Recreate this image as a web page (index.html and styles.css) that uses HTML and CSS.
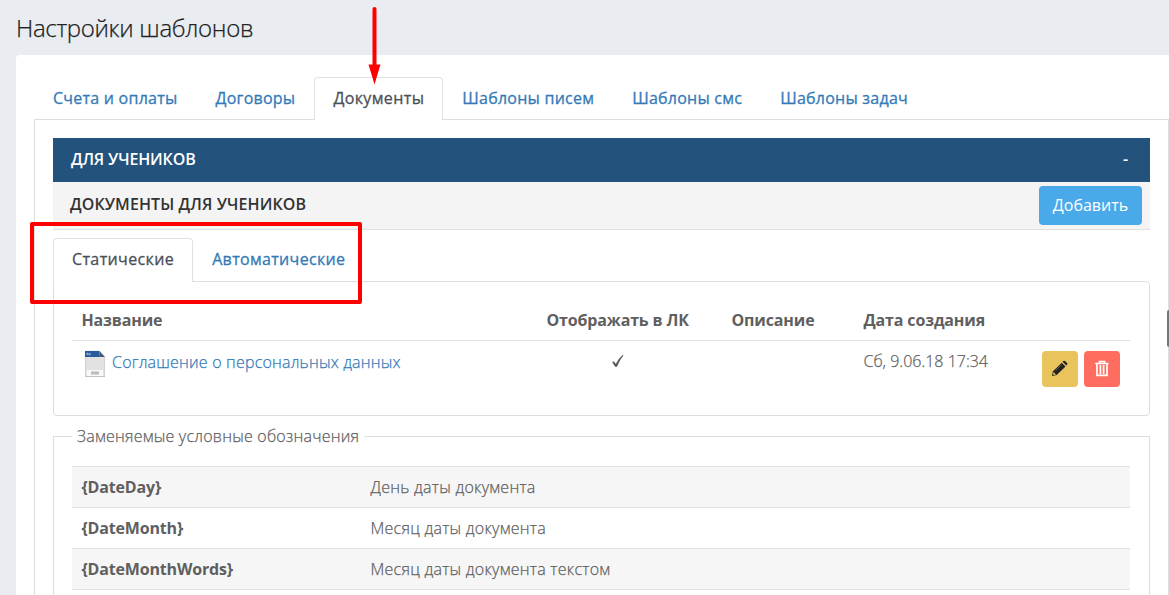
FILE: index.html
```html
<!DOCTYPE html>
<html lang="ru">
<head>
    <meta charset="UTF-8">
    <meta name="viewport" content="width=device-width, initial-scale=1.0">
    <title>Настройки шаблонов</title>
    <link rel="stylesheet" href="styles.css">
</head>
<body>
    <h1 class="page-title">Настройки шаблонов</h1>
    <main class="panel">
        <nav class="tabs">
            <a class="tab">Счета и оплаты</a>
            <a class="tab">Договоры</a>
            <a class="tab active">Документы</a>
            <a class="tab">Шаблоны писем</a>
            <a class="tab">Шаблоны смс</a>
            <a class="tab">Шаблоны задач</a>
        </nav>
        <div class="tab-content">
            <div class="group-header"><span>ДЛЯ УЧЕНИКОВ</span><span class="collapse">-</span></div>
            <div class="sub-header">
                <span>ДОКУМЕНТЫ ДЛЯ УЧЕНИКОВ</span>
                <button class="btn-add">Добавить</button>
            </div>
            <nav class="tabs inner-tabs">
                <a class="tab active">Статические</a>
                <a class="tab">Автоматические</a>
            </nav>
            <div class="documents">
                <div class="doc-row doc-head">
                    <div>Название</div>
                    <div>Отображать в ЛК</div>
                    <div>Описание</div>
                    <div>Дата создания</div>
                    <div></div>
                </div>
                <div class="doc-row">
                    <div class="doc-name">
                        <svg class="file-icon" width="22" height="28" viewBox="0 0 22 28">
                            <path d="M1 .5h14l6 6.500v19.500H1z" fill="#e2e2e2"/>
                            <path d="M1.500 7v19.500h19V7" fill="none" stroke="#d2d2d2"/>
                            <path d="M1 1h14l1 6H1z" fill="#285b9f"/>
                            <path d="M15 .5l6 6.500h-5z" fill="#4a5a75"/>
                            <path d="M3 5V3l3 2V3" fill="none" stroke="#a9c2e5"/>
                            <path d="M3 20h16v6H3z" fill="#f8f8f8"/>
                            <path d="M7 21.500h8v3H7z" fill="#bcbcbc"/>
                            <path d="M1 26.500h20" stroke="#c2c2c2"/>
                        </svg>
                        <a>Соглашение о персональных данных</a>
                    </div>
                    <div class="doc-visible">
                        <svg width="14" height="14" viewBox="0 0 14 14"><path d="M1.300 8.200l1.500-1 2 2.700Q7.500 4.500 11.700 1l.9.300Q8.500 6 5.900 12.800H4.200z" fill="#555"/></svg>
                    </div>
                    <div></div>
                    <div class="doc-date">Сб, 9.06.18 17:34</div>
                    <div class="actions">
                        <button class="btn-icon edit">
                            <svg width="17" height="17" viewBox="0 0 18 18"><path d="M1 17l1.200-5L11.400 2.800l4 4L6 16z" fill="#222"/><path d="M12.300 1.900l.8-.8q1-.8 2 .1l1.900 1.900q.8.900 0 1.900l-.8.900z" fill="#222"/><path d="M2.800 12.800l2.500 2.500-2.200.6-.9-.9z" fill="#e9c35b"/><path d="M5 11l6.300-6.300" stroke="#817044" stroke-width=".8"/></svg>
                        </button>
                        <button class="btn-icon delete">
                            <svg width="16" height="18" viewBox="0 0 16 18"><path d="M5.500 3V1.500h5V3M1.300 3.500h13.400M3 4v11.400h10V4M6.400 5v9M9.600 5v9" fill="none" stroke="#fff" stroke-width="1.700"/></svg>
                        </button>
                    </div>
                </div>
            </div>
            <fieldset class="legend-box">
                <legend>Заменяемые условные обозначения</legend>
                <div class="var-row"><b>{DateDay}</b><span>День даты документа</span></div>
                <div class="var-row"><b>{DateMonth}</b><span>Месяц даты документа</span></div>
                <div class="var-row"><b>{DateMonthWords}</b><span>Месяц даты документа текстом</span></div>
            </fieldset>
        </div>
    </main>

    <div class="highlight"></div>
    <svg class="arrow" width="14" height="80" viewBox="0 0 14 80"><path d="M6.500 4v58" stroke="#f00" stroke-width="4" stroke-linecap="round"/><path d="M.5 59.500h12l-6 20z" fill="#f00"/></svg>
    <div class="side-handle"></div>
</body>
</html>
```

FILE: styles.css
```css
* {
    box-sizing: border-box;
}
body {
    display: flex;
    flex-direction: column;
    margin: 0;
    height: 595px;
    overflow: hidden;
    position: relative;
    background-color: #e9edf2;
    color: #5f5f5f;
    font-family: 'Open Sans', sans-serif;
    font-size: 16px;
    line-height: 24px;
}
.page-title {
    margin: 0;
    padding: 12px 16px 11px;
    height: 55px;
    font-size: 24px;
    line-height: 32px;
    font-weight: 300;
    letter-spacing: -0.32px;
    color: #222;
    -webkit-text-stroke: 0.25px;
}
.panel {
    display: flex;
    flex-direction: column;
    flex: 1;
    min-height: 0;
    margin-left: 16px;
    padding: 22px 0 0 18px;
    background-color: #fff;
    border-top-left-radius: 4px;
}
.tabs {
    display: flex;
    flex-shrink: 0;
    height: 43px;
}
.tab {
    padding: 8px 18px 0;
    border: 1px solid transparent;
    color: #337ab7;
    font-weight: 400;
    letter-spacing: 0.24px;
    white-space: nowrap;
    -webkit-text-stroke: 0.3px;
}
.tab.active {
    position: relative;
    z-index: 1;
    color: #495057;
    background-color: #fff;
    border-color: #dee2e6;
    border-bottom: 0;
    border-radius: 4px 4px 0 0;
    letter-spacing: 0.38px;
}
.tab-content {
    flex: 1;
    min-height: 0;
    margin-top: -1px;
    padding: 18px 18px 0;
    border: 1px solid #dcdee1;
    border-bottom: 0;
}
.group-header {
    display: flex;
    justify-content: space-between;
    height: 44px;
    padding: 9px 22px 0 18px;
    background-color: #23527c;
    color: #fff;
    font-weight: 600;
    letter-spacing: -0.15px;
}
.sub-header {
    display: flex;
    justify-content: space-between;
    height: 48px;
    padding: 4px 8px 0 17px;
    background-color: #f4f4f4;
    border-bottom: 1px solid #dfe1e3;
    color: #333;
    font-weight: 600;
    line-height: 36px;
    letter-spacing: 0.1px;
}
.btn-add {
    width: 103px;
    height: 39px;
    padding: 0 0 2px;
    border: 0;
    border-radius: 4px;
    background-color: #4aa9e9;
    color: #fff;
    font: 16px 'Open Sans', sans-serif;
}
.inner-tabs {
    margin-top: 8px;
    height: 44px;
}
.inner-tabs .tab:not(.active) {
    letter-spacing: 0.33px;
}
.documents {
    margin-top: -1px;
    height: 135px;
    padding: 18px 19px 18px 18px;
    border: 1px solid #dcdee1;
    border-radius: 0 4px 4px 4px;
}
.doc-row {
    display: grid;
    grid-template-columns: 465px 185px 132px 170px 1fr;
    padding-left: 9.5px;
    font-weight: 300;
    -webkit-text-stroke: 0.25px;
}
.doc-head {
    height: 41px;
    padding-top: 8px;
    border-bottom: 1px solid #dee2e6;
    font-weight: 700;
    letter-spacing: -0.15px;
    -webkit-text-stroke: 0;
}
.doc-row:not(.doc-head) {
    padding-top: 8px;
}
.doc-name {
    display: flex;
    gap: 6px;
    padding-left: 2.5px;
    color: #337ab7;
    letter-spacing: 0.2px;
}
.doc-name a {
    padding-top: 1px;
}
.file-icon {
    margin-top: 1px;
}
.doc-visible {
    padding-left: 64px;
    padding-top: 5px;
    line-height: 0;
}
.actions {
    display: flex;
    gap: 6px;
    padding-top: 2px;
    padding-left: 8.5px;
}
.btn-icon {
    display: flex;
    align-items: center;
    justify-content: center;
    width: 36px;
    height: 36px;
    padding: 0 1px 1px 0;
    border: 0;
    border-radius: 4px;
}
.edit {
    background-color: #e9c35b;
}
.delete {
    background-color: #ff6d60;
}
.legend-box {
    margin: 8px 0 0;
    padding: 18px 19px 10px 18px;
    border: 1px solid #dcdee1;
    border-bottom: 0;
    font-weight: 300;
}
.legend-box legend {
    padding: 0 5px;
    letter-spacing: 0.23px;
    -webkit-text-stroke: 0.25px;
}
.var-row {
    display: grid;
    grid-template-columns: 289px 1fr;
    height: 41px;
    padding: 8px 9.5px;
    border-top: 1px solid #dee2e6;
}
.var-row:nth-child(even) {
    background-color: #f6f6f6;
}
.var-row:last-child {
    height: 42px;
    border-bottom: 1px solid #dee2e6;
}
.var-row b {
    font-weight: 700;
    letter-spacing: -0.18px;
}
.var-row span {
    letter-spacing: 0.26px;
    -webkit-text-stroke: 0.25px;
}
.highlight {
    position: absolute;
    left: 30px;
    top: 222px;
    width: 332px;
    height: 82px;
    border: 4px solid #f00;
    border-radius: 2px;
    z-index: 2;
}
.arrow {
    position: absolute;
    left: 368px;
    top: 5px;
    z-index: 2;
}
.side-handle {
    position: absolute;
    right: 0;
    top: 310px;
    width: 2px;
    height: 37px;
    border-radius: 2px 0 0 2px;
    background-color: #6c7782;
}
```
